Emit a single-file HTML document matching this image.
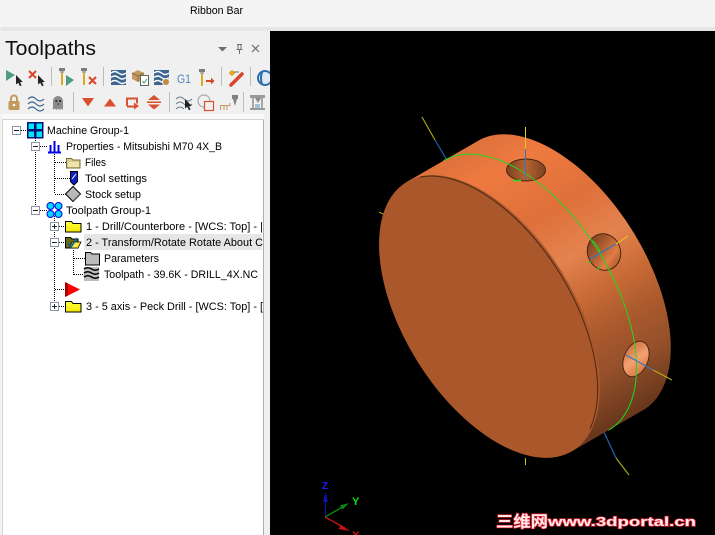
<!DOCTYPE html>
<html>
<head>
<meta charset="utf-8">
<title>Toolpaths</title>
<style>
html,body{margin:0;padding:0;background:#f0f0f0;width:715px;height:535px;overflow:hidden}
svg{display:block;position:absolute;left:0;top:0}
text{font-family:"Liberation Sans","Noto Sans CJK SC",sans-serif}
.t{font-size:11px;fill:#000}
.dot{stroke:#000;stroke-width:1;stroke-dasharray:1 1;fill:none;shape-rendering:crispEdges}
.sep{stroke:#bdbdbd;stroke-width:1;shape-rendering:crispEdges}
</style>
</head>
<body>
<svg width="715" height="535" viewBox="0 0 715 535" xmlns="http://www.w3.org/2000/svg">
<defs>
<linearGradient id="cyl" gradientUnits="userSpaceOnUse" x1="490" y1="140" x2="643" y2="406">
<stop offset="0" stop-color="#e0723c"/><stop offset=".1" stop-color="#ee7a40"/><stop offset=".3" stop-color="#df703a"/><stop offset=".46" stop-color="#e3834f"/><stop offset=".6" stop-color="#c86a35"/><stop offset=".72" stop-color="#ab5a2d"/><stop offset=".85" stop-color="#95502a"/><stop offset="1" stop-color="#6a381d"/>
</linearGradient>
<linearGradient id="h1" x1="0" x2="1" y1="0" y2="0"><stop offset="0" stop-color="#7d4222"/><stop offset=".5" stop-color="#b5622f"/><stop offset="1" stop-color="#7d4222"/></linearGradient>
<linearGradient id="h2" x1="0" x2=".6" y1="0" y2="1"><stop offset="0" stop-color="#6e3a1e"/><stop offset=".45" stop-color="#a85a2e"/><stop offset=".8" stop-color="#e27c44"/><stop offset="1" stop-color="#b8602f"/></linearGradient>
<linearGradient id="h3" x1="0" x2="1" y1="0" y2="1"><stop offset="0" stop-color="#c0622f"/><stop offset=".5" stop-color="#f5a070"/><stop offset="1" stop-color="#cc6a38"/></linearGradient>
<linearGradient id="fld" x1="0" x2="0" y1="0" y2="1"><stop offset="0" stop-color="#ffff40"/><stop offset="1" stop-color="#f5e800"/></linearGradient>
<g id="cursor"><path d="M0 0L0 9.500L2.200 7.800L4 11.200L5.600 10.400L4 7.200L6.800 7Z" fill="#222"/></g>
<g id="tool"><rect x="0" y="0" width="6" height="3" fill="#7d7d7d"/><rect x="1.200" y="3" width="3.600" height="2" fill="#a5a5a5"/><rect x="2" y="5" width="2" height="12" fill="#e0a81c"/></g>
<g id="wv"><path d="M0 3q3.700-3 7.500 0t7.500 0M0 7.500q3.700-3 7.500 0t7.500 0M0 12q3.700-3 7.500 0t7.500 0" fill="none" stroke="#fff" stroke-width="1.400"/></g>
<g id="folder"><path d="M.5 2.500h6l1.500 2h8v8.500h-15.500z" fill="url(#fld)" stroke="#000" stroke-width="1"/></g>
</defs>

<!-- chrome -->
<rect width="715" height="535" fill="#f0f0f0"/>
<rect width="715" height="27" fill="#f4f4f4"/>
<rect x="1" y="27" width="714" height="4" fill="#e6e6e6"/>
<text class="t" x="190" y="14" textLength="53" lengthAdjust="spacingAndGlyphs">Ribbon Bar</text>
<text x="5" y="55" font-size="20" fill="#111" textLength="91" lengthAdjust="spacingAndGlyphs">Toolpaths</text>
<path d="M218 47h9l-4.500 4.500z" fill="#6e6e6e"/>
<path d="M237 44.500h5M238 44.500v5h3v-5M236.500 49.500h6M239.500 50v4" fill="none" stroke="#6e6e6e" stroke-width="1"/>
<path d="M252 45l7 7M259 45l-7 7" stroke="#6e6e6e" stroke-width="1.200"/>

<!-- toolbar row 1 -->
<path d="M6 70l9 5-9 6z" fill="#4f9a84"/><use href="#cursor" x="16" y="75"/>
<path d="M29 71l7 7M36 71l-7 7" stroke="#d9442a" stroke-width="2"/><use href="#cursor" x="38" y="75"/>
<line class="sep" x1="51.500" y1="67" x2="51.500" y2="86"/>
<use href="#tool" x="59" y="68"/><path d="M66 75l8 5-8 6z" fill="#4f9a84"/>
<use href="#tool" x="81" y="68"/><path d="M89 77l7 7M96 77l-7 7" stroke="#d9442a" stroke-width="2"/>
<line class="sep" x1="103.500" y1="67" x2="103.500" y2="86"/>
<rect x="111" y="70" width="15" height="15" fill="#3b6690"/><use href="#wv" x="111" y="70"/>
<path d="M132 73l6-3 6 3v6l-6 3-6-3z" fill="#c49a62"/><path d="M132 73l6 3 6-3M138 76v6" stroke="#8f6c3c" fill="none"/>
<rect x="140.500" y="75.500" width="8" height="10" fill="#fff" stroke="#5c6a55"/><path d="M142.500 81l1.500 2 3-4" fill="none" stroke="#3f9a6a" stroke-width="1"/>
<rect x="154" y="70" width="15" height="15" fill="#3b6690"/><use href="#wv" x="154" y="70"/><circle cx="166" cy="82" r="3.500" fill="#c08a3c" stroke="#f0f0f0"/>
<text x="177" y="83" font-size="12" fill="#4a86c0" textLength="14" lengthAdjust="spacingAndGlyphs">G1</text>
<use href="#tool" x="199" y="69"/><path d="M206 80h5v-2.500l3.500 3.500-3.500 3.500v-2.500h-5z" fill="#d9442a"/>
<line class="sep" x1="221.500" y1="67" x2="221.500" y2="86"/>
<path d="M231 85l11-11" stroke="#d9442a" stroke-width="3.500" stroke-linecap="round"/><circle cx="232" cy="73" r="2.500" fill="#e0a81c"/><path d="M234 72h5" stroke="#6b6b6b"/><path d="M229 73h6M232 70v6" stroke="#e0a81c"/>
<line class="sep" x1="250.500" y1="67" x2="250.500" y2="86"/>
<circle cx="265" cy="78" r="7" fill="#dfe9f3" stroke="#2f6ea8" stroke-width="2"/><path d="M262 72q-2 6 0 12" fill="none" stroke="#2f6ea8" stroke-width="2"/>

<!-- toolbar row 2 -->
<path d="M11 101v-2.500a3 3 0 0 1 6 0v2.500" fill="none" stroke="#c09a5a" stroke-width="2"/><rect x="8.500" y="101" width="11" height="9" rx="1" fill="#c09a5a"/><circle cx="14" cy="105" r="1.300" fill="#fff"/>
<g fill="none" stroke="#3b6690" stroke-width="1.100"><path d="M28 99q4-4 8 0t8 0M28 104q4-4 8 0t8 0M28 109q4-4 8 0t8 0"/></g>
<path d="M53 110v-9a5 5 0 0 1 10 0v9l-1.700-1.500-1.600 1.500-1.700-1.500-1.600 1.500-1.700-1.500z" fill="#8b8b8b"/><circle cx="56.300" cy="101" r="1" fill="#222"/><circle cx="60" cy="101" r="1" fill="#222"/><rect x="57.500" y="103.500" width="1.500" height="1" fill="#222"/>
<line class="sep" x1="73.500" y1="92" x2="73.500" y2="112"/>
<path d="M82 98h12l-6 8.500z" fill="#d9502e"/>
<path d="M104 106.500h12l-6-8z" fill="#d9502e"/>
<path d="M127 106v-7.500h10v5M127 106.500h7" fill="none" stroke="#d9502e" stroke-width="2"/><path d="M134 102.500v7l5-3.500z" fill="#d9502e"/>
<path d="M148 100l6-5 6 5zM148 104.500l6 5 6-5z" fill="#d9502e"/><rect x="147" y="101.500" width="14" height="1.500" fill="#d9502e"/>
<line class="sep" x1="169.500" y1="92" x2="169.500" y2="112"/>
<g fill="none" stroke="#6f8191" stroke-width="1"><path d="M176 99q4-4 8 0t8 0M176 104q4-4 8 0t8 0M176 109q4-4 8 0"/></g>
<use href="#cursor" x="185" y="99"/>
<circle cx="204" cy="101" r="6" fill="none" stroke="#a9a9a9" stroke-width="1.200"/><rect x="204.500" y="101.500" width="9" height="9" fill="#f0f0f0" stroke="#d9502e" stroke-width="1.200"/>
<path d="M220.500 110v-4.500h9.500v-2.500M224 106v4M227 106v4" fill="none" stroke="#c49a62" stroke-width="1"/><rect x="232" y="95" width="6" height="4" fill="#808080"/><path d="M233 99h4l-2 7z" fill="#808080"/>
<line class="sep" x1="243.500" y1="92" x2="243.500" y2="112"/>
<rect x="250" y="95" width="15" height="3" fill="#9a9a9a"/><rect x="252" y="98" width="2" height="11" fill="#a8a8a8"/><rect x="261" y="98" width="2" height="11" fill="#a8a8a8"/><path d="M255 98h6l-3 5z" fill="#8a8a8a"/><rect x="250" y="108" width="15" height="2" fill="#9a9a9a"/><rect x="255" y="104" width="5" height="4" fill="#9cc1dd"/>

<!-- tree -->
<rect x="1" y="114" width="268" height="421" fill="#f9f9f9"/>
<rect x="264" y="114" width="6" height="421" fill="#efefef"/>
<rect x="3" y="120" width="260" height="415" fill="#fff"/>
<path d="M2.500 535V119.500H263" fill="none" stroke="#d2d2d2" shape-rendering="crispEdges"/>
<path d="M263.500 119.500V535" fill="none" stroke="#adadad" shape-rendering="crispEdges"/>
<rect x="84" y="234" width="178" height="16" fill="#e6e6e6"/>

<g class="dot">
<path d="M21 130.500h6M35.500 136v71M40 146.500h7M54.500 152v42M55 162.500h11M55 178.500h15M55 194.500h11M40 210.500h7M54.500 216v88M59 226.500h6M59 242.500h6M55 289.500h11M59 306.500h6M73.500 250v25M74 258.500h11M74 274.500h11"/>
</g>

<g fill="#fff" stroke="#8a94a6" shape-rendering="crispEdges">
<rect x="12.500" y="126.500" width="8" height="8"/><rect x="31.500" y="142.500" width="8" height="8"/><rect x="31.500" y="206.500" width="8" height="8"/><rect x="50.500" y="222.500" width="8" height="8"/><rect x="50.500" y="238.500" width="8" height="8"/><rect x="50.500" y="302.500" width="8" height="8"/>
</g>
<g stroke="#222" shape-rendering="crispEdges"><path d="M14 130.500h5M33 146.500h5M33 210.500h5M52 226.500h5M52 242.500h5M52 306.500h5M54.500 224v5M54.500 304v5"/></g>

<!-- machine grp -->
<g fill="#00e8f8" stroke="#00107a" stroke-width="1.500" shape-rendering="crispEdges"><rect x="27.500" y="122.500" width="7" height="7"/><rect x="35.500" y="122.500" width="7" height="7"/><rect x="27.500" y="130.500" width="7" height="7"/><rect x="35.500" y="130.500" width="7" height="7"/></g>
<!-- properties -->
<path d="M48 152.500h13M50.500 152v-7M54.500 152v-11M58.500 152v-7" stroke="#0000e0" stroke-width="2" fill="none"/>
<!-- files -->
<path d="M66.500 158.500h5l1.500 1.500h7v8h-13.500z" fill="#d8cc9a" stroke="#7a6c3a"/><rect x="68" y="162" width="11" height="5" fill="#ece4a8"/>
<!-- tool settings -->
<path d="M70.500 171.500h7v10l-3.500 3.500-3.500-3.500z" fill="#0a1fc8" stroke="#000"/><path d="M72 179l4-5" stroke="#fff"/>
<!-- stock -->
<path d="M73 186.500l7.500 7.500-7.500 7.500-7.500-7.500z" fill="#b8b8b8" stroke="#000"/><path d="M73 201l7-7" stroke="#666"/>
<!-- toolpath grp -->
<g fill="#00d8ff" stroke="#0000e0"><circle cx="50.500" cy="206" r="3.500"/><circle cx="58.500" cy="206" r="3.500"/><circle cx="50.500" cy="214" r="3.500"/><circle cx="58.500" cy="214" r="3.500"/></g>
<use href="#folder" x="65" y="219"/>
<path d="M65.500 237.500h5l1.500 1.500h6v9h-12.500z" fill="#6e6a10" stroke="#000"/><path d="M69 248l3-6h9l-3 6z" fill="#ffe840" stroke="#000" stroke-width=".8"/><path d="M68 243l3 4 6-9" fill="none" stroke="#0a6a8a" stroke-width="1.800"/>
<!-- parameters -->
<path d="M85.500 252.500h5l1.500 1.500h7.500v11h-14z" fill="#bcbcbc" stroke="#000"/>
<!-- toolpath wave -->
<rect x="84" y="267" width="15" height="14" fill="#bcbcbc"/><g fill="none" stroke="#000" stroke-width="1.500"><path d="M84 269q3.700-2.500 7.500 0t7.500 0M84 273q3.700-2.500 7.500 0t7.500 0M84 277q3.700-2.500 7.500 0t7.500 0"/></g>
<!-- red arrow -->
<path d="M65 282l15 7.500-15 7.500z" fill="#ff0000"/><path d="M65 282l3 1.500v12l-3 1.500z" fill="#a80000"/>
<use href="#folder" x="65" y="299"/>

<g class="t">
<text class="t" x="47" y="134" textLength="82" lengthAdjust="spacingAndGlyphs">Machine Group-1</text>
<text class="t" x="66" y="150" textLength="156" lengthAdjust="spacingAndGlyphs">Properties - Mitsubishi M70 4X_B</text>
<text class="t" x="85" y="166" textLength="21" lengthAdjust="spacingAndGlyphs">Files</text>
<text class="t" x="85" y="182" textLength="62" lengthAdjust="spacingAndGlyphs">Tool settings</text>
<text class="t" x="85" y="198" textLength="56" lengthAdjust="spacingAndGlyphs">Stock setup</text>
<text class="t" x="66" y="214" textLength="85" lengthAdjust="spacingAndGlyphs">Toolpath Group-1</text>
<text class="t" x="86" y="230" textLength="177" lengthAdjust="spacingAndGlyphs">1 - Drill/Counterbore - [WCS: Top] - |</text>
<text class="t" x="86" y="246" textLength="177" lengthAdjust="spacingAndGlyphs">2 - Transform/Rotate Rotate About C</text>
<text class="t" x="104" y="262" textLength="55" lengthAdjust="spacingAndGlyphs">Parameters</text>
<text class="t" x="104" y="278" textLength="154" lengthAdjust="spacingAndGlyphs">Toolpath - 39.6K - DRILL_4X.NC</text>
<text class="t" x="86" y="310" textLength="177" lengthAdjust="spacingAndGlyphs">3 - 5 axis - Peck Drill - [WCS: Top] - [</text>
</g>

<!-- viewport -->
<rect x="270" y="31" width="445" height="504" fill="#000"/>

<!-- back axis lines -->
<path d="M422 117L435 140" stroke="#a8a010" stroke-width="1.200"/><path d="M435 140L448 162" stroke="#1f62b0" stroke-width="1.200"/>
<path d="M379 212L385 215" stroke="#a8a010" stroke-width="1.200"/>
<path d="M603 430L616 458" stroke="#1f62b0" stroke-width="1.200"/><path d="M616 458L629 475" stroke="#a8a010" stroke-width="1.200"/>
<path d="M525.500 458V465" stroke="#c8c020" stroke-width="1"/>

<!-- body: hull of two offset ellipses -->
<path d="M407 181.700L480 139.700A158 85 58 0 1 645 409L572 451.300Z" fill="url(#cyl)"/>
<!-- face -->
<ellipse cx="489.500" cy="316.500" rx="158" ry="85" transform="rotate(58 489.500 316.500)" fill="#a9572b"/>
<path d="M420 177A158 85 58 0 1 590 429" fill="none" stroke="#4a2812" stroke-width="1"/>

<!-- holes -->
<ellipse cx="526" cy="170" rx="19.500" ry="11" fill="url(#h1)" stroke="#3c2010" stroke-width=".9"/>
<ellipse cx="604" cy="252" rx="16.500" ry="18.500" fill="url(#h2)" stroke="#3c2010" stroke-width=".9" transform="rotate(-20 604 252)"/>
<ellipse cx="636" cy="359" rx="12" ry="18.500" fill="url(#h3)" stroke="#3c2010" stroke-width=".9" transform="rotate(22 636 359)"/>

<!-- green arc -->
<path d="M443.500 160.700A158 85 58 0 1 608.500 430.300" fill="none" stroke="#20d820" stroke-width="1"/>
<path d="M591 240q7 4 10 15M597 270l4-4M591 262h-4" fill="none" stroke="#20d820" stroke-width="1"/>
<path d="M521 180.500h-8" stroke="#20e020" stroke-width="1.500"/>

<!-- hole axes -->
<path d="M525.500 127V149" stroke="#e8c820" stroke-width="1"/><path d="M525.500 149V180" stroke="#2f78c0" stroke-width="1"/>
<path d="M628 236L616 244" stroke="#e8b820" stroke-width="1.200"/><path d="M616 244L590 259" stroke="#2f78c0" stroke-width="1.200"/>
<path d="M626 355L653 370" stroke="#2f78c0" stroke-width="1.200"/><path d="M653 370L672 380" stroke="#b8a818" stroke-width="1.200"/>

<!-- triad -->
<path d="M325.500 517V495" stroke="#1010b0" stroke-width="1"/><path d="M325.500 492l-2.500 10h5z" fill="#1010b0"/>
<path d="M325 517L346 505" stroke="#0c8a0c" stroke-width="1.300"/><path d="M349 503l-9 2.500 2.500 4z" fill="#0c8a0c"/>
<path d="M325 517L345 528" stroke="#c81010" stroke-width="1.300"/><path d="M350 531l-9-6-2.500 4z" fill="#c81010"/>
<text x="322" y="489" font-size="10" font-weight="bold" fill="#1a1aff">Z</text>
<text x="352" y="505" font-size="11" font-weight="bold" fill="#10e010">Y</text>
<text x="352" y="539" font-size="11" font-weight="bold" fill="#e01010">X</text>

<!-- watermark -->
<g font-weight="bold" fill="#ffe9e9" stroke="#ee2233" stroke-width="1.300" style="paint-order:stroke">
<text x="496" y="527" font-size="16" textLength="52" lengthAdjust="spacingAndGlyphs">三维网</text>
<text x="548" y="526" font-size="13" textLength="148" lengthAdjust="spacingAndGlyphs">www.3dportal.cn</text>
</g>
</svg>
</body>
</html>
